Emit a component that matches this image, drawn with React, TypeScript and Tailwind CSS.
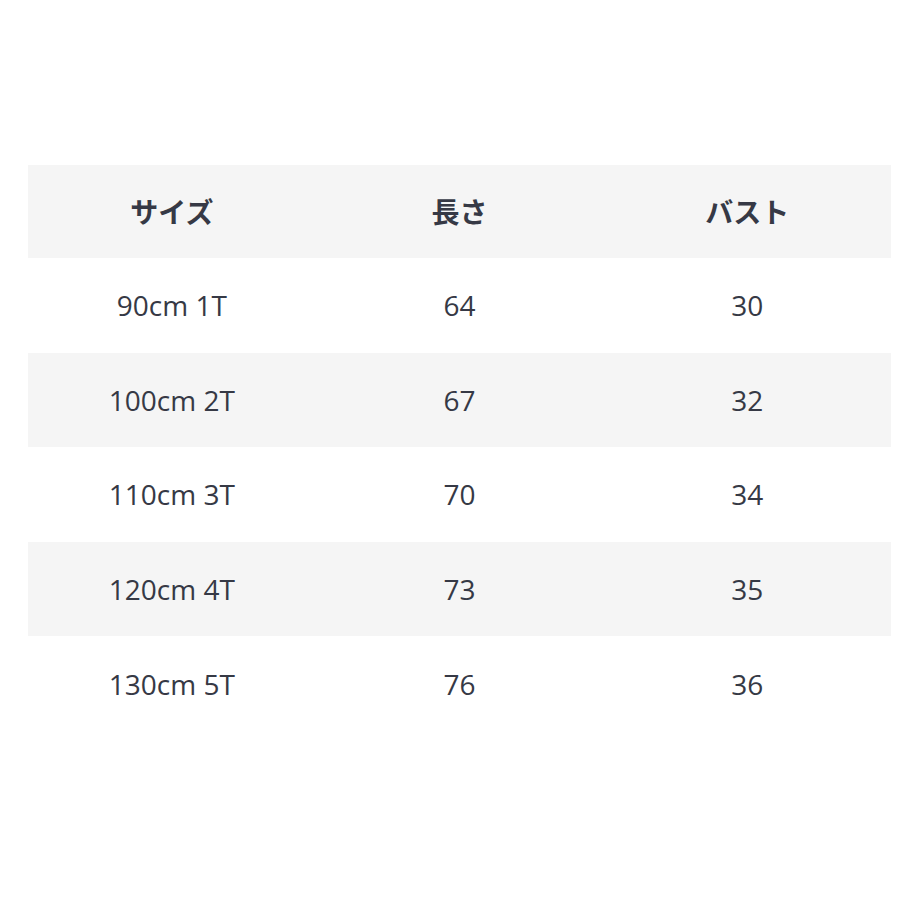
const header = ["サイズ", "長さ", "バスト"];

const rows: string[][] = [
  ["90cm 1T", "64", "30"],
  ["100cm 2T", "67", "32"],
  ["110cm 3T", "70", "34"],
  ["120cm 4T", "73", "35"],
  ["130cm 5T", "76", "36"],
];

export default function App() {
  return (
    <div
      className="min-h-[920px] bg-white pt-[165px] pl-[28px] pr-[29px] text-[#363945]"
      style={{ fontFamily: '"Open Sans", "Noto Sans CJK JP", sans-serif' }}
    >
      <table className="w-full border-collapse table-fixed">
        <thead>
          <tr className="bg-[#f5f5f5] h-[93px]">
            {header.map((h) => (
              <th key={h} className="text-[28px] font-bold text-center align-middle">
                {h}
              </th>
            ))}
          </tr>
        </thead>
        <tbody>
          {rows.map((r, i) => (
            <tr key={r[0]} className={(i % 2 === 1 ? "bg-[#f5f5f5]" : "bg-white") + " h-[94.6px]"}>
              {r.map((c, j) => (
                <td key={j} className="text-[28px] text-center align-middle">
                  {c}
                </td>
              ))}
            </tr>
          ))}
        </tbody>
      </table>
    </div>
  );
}
